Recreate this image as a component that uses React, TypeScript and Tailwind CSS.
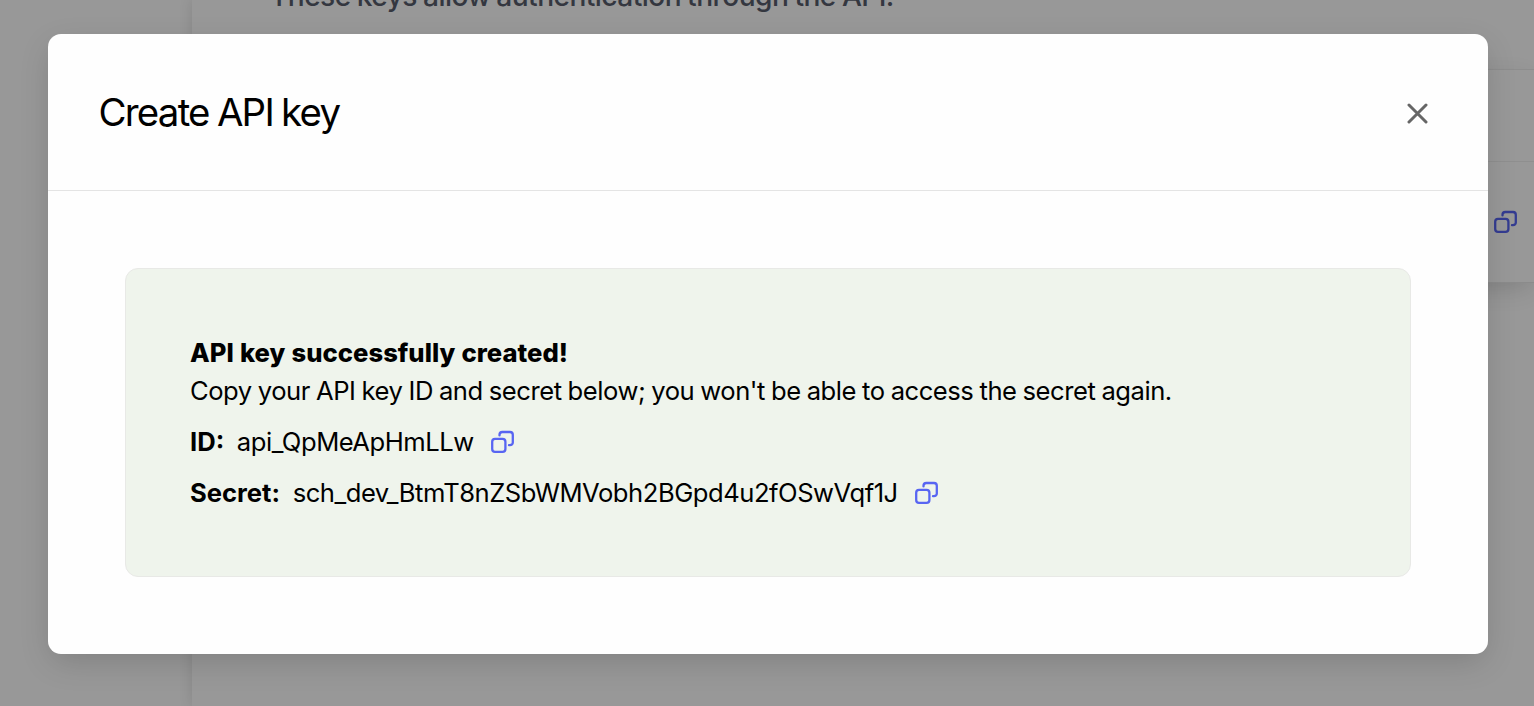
function CopyIcon({ className = "" }: { className?: string }) {
  return (
    <svg
      width="24"
      height="24"
      viewBox="0 0 24 24"
      fill="none"
      stroke="currentColor"
      strokeWidth="2.3"
      strokeLinecap="round"
      className={`shrink-0 ${className}`}
    >
      <rect x="1.2" y="8.9" width="13.2" height="13" rx="2.8" />
      <path d="M8.5 5.4V4.8A2.8 2.8 0 0 1 11.3 2H19A2.8 2.8 0 0 1 21.8 4.8V12.4A2.8 2.8 0 0 1 19 15.2H18" />
    </svg>
  );
}

function Field({ label, value }: { label: string; value: string }) {
  return (
    <div className="mt-[12.8px] flex items-center">
      <span className="font-bold">{label}</span>
      <span className="ml-[12.6px] tracking-[-0.47px]">{value}</span>
      <CopyIcon className="ml-[17.4px] text-[#5865f2]" />
    </div>
  );
}

export default function App() {
  return (
    <div className="relative h-[706px] w-full overflow-hidden bg-[#989898] font-['Inter',sans-serif] text-[25.6px] leading-[38.4px] text-black">
      <div className="flex h-full">
        <div className="w-[192px] shrink-0" />
        <div className="flex-1 bg-[#989898] shadow-[0_0_13px_rgba(0,0,0,0.12)]">
          <div className="-mt-[23px] pl-[78px] text-[28.16px] font-medium tracking-[-0.58px] whitespace-nowrap text-[#343740] [word-spacing:-0.8px]">
            These keys allow authentication through the API.
          </div>
          <div className="mt-[54px] ml-[80px] flex h-[214px] flex-col border-t border-[#8d8d8d] shadow-[0_8px_24px_-4px_rgba(0,0,0,0.16)]">
            <div className="h-[92px] shrink-0 border-b border-[#8f8f8f]" />
            <div className="flex flex-1 items-center justify-end border-b border-[#8b8b8b] pr-[16px]">
              <CopyIcon className="text-[#343c91]" />
            </div>
          </div>
        </div>
      </div>
      <div
        role="dialog"
        className="absolute top-[34px] right-[46px] bottom-[52px] left-[48px] flex flex-col rounded-[13px] bg-[#fefefe] shadow-[0_10px_32px_-4px_rgba(0,0,0,0.17)]"
      >
        <header className="flex h-[157px] shrink-0 items-center justify-between border-b border-[#e4e4e4] pr-[60px] pl-[50.5px]">
          <h2 className="pt-px text-[38.4px] tracking-[-1.75px] [word-spacing:-0.9px]">Create API key</h2>
          <button aria-label="Close" className="pt-[2px] text-[#666666]">
            <svg width="21" height="21" viewBox="0 0 21 21" stroke="currentColor" strokeWidth="3" strokeLinecap="round">
              <path d="M2 2L19 19M19 2L2 19" />
            </svg>
          </button>
        </header>
        <div className="flex-1 p-[77px]">
          <section className="h-[309px] rounded-[13px] border border-[#e8e9e6] bg-[#eff4ec] px-[64px] pt-[64.3px]">
            <div className="pt-[0.3px] font-extrabold tracking-[0.02px] [word-spacing:0.6px]">API key successfully created!</div>
            <p className="tracking-[-0.47px] [word-spacing:-0.65px]">
              Copy your API key ID and secret below; you won't be able to access the secret again.
            </p>
            <div className="-mt-[0.3px]">
              <Field label="ID:" value="api_QpMeApHmLLw" />
              <Field label="Secret:" value="sch_dev_BtmT8nZSbWMVobh2BGpd4u2fOSwVqf1J" />
            </div>
          </section>
        </div>
      </div>
    </div>
  );
}
